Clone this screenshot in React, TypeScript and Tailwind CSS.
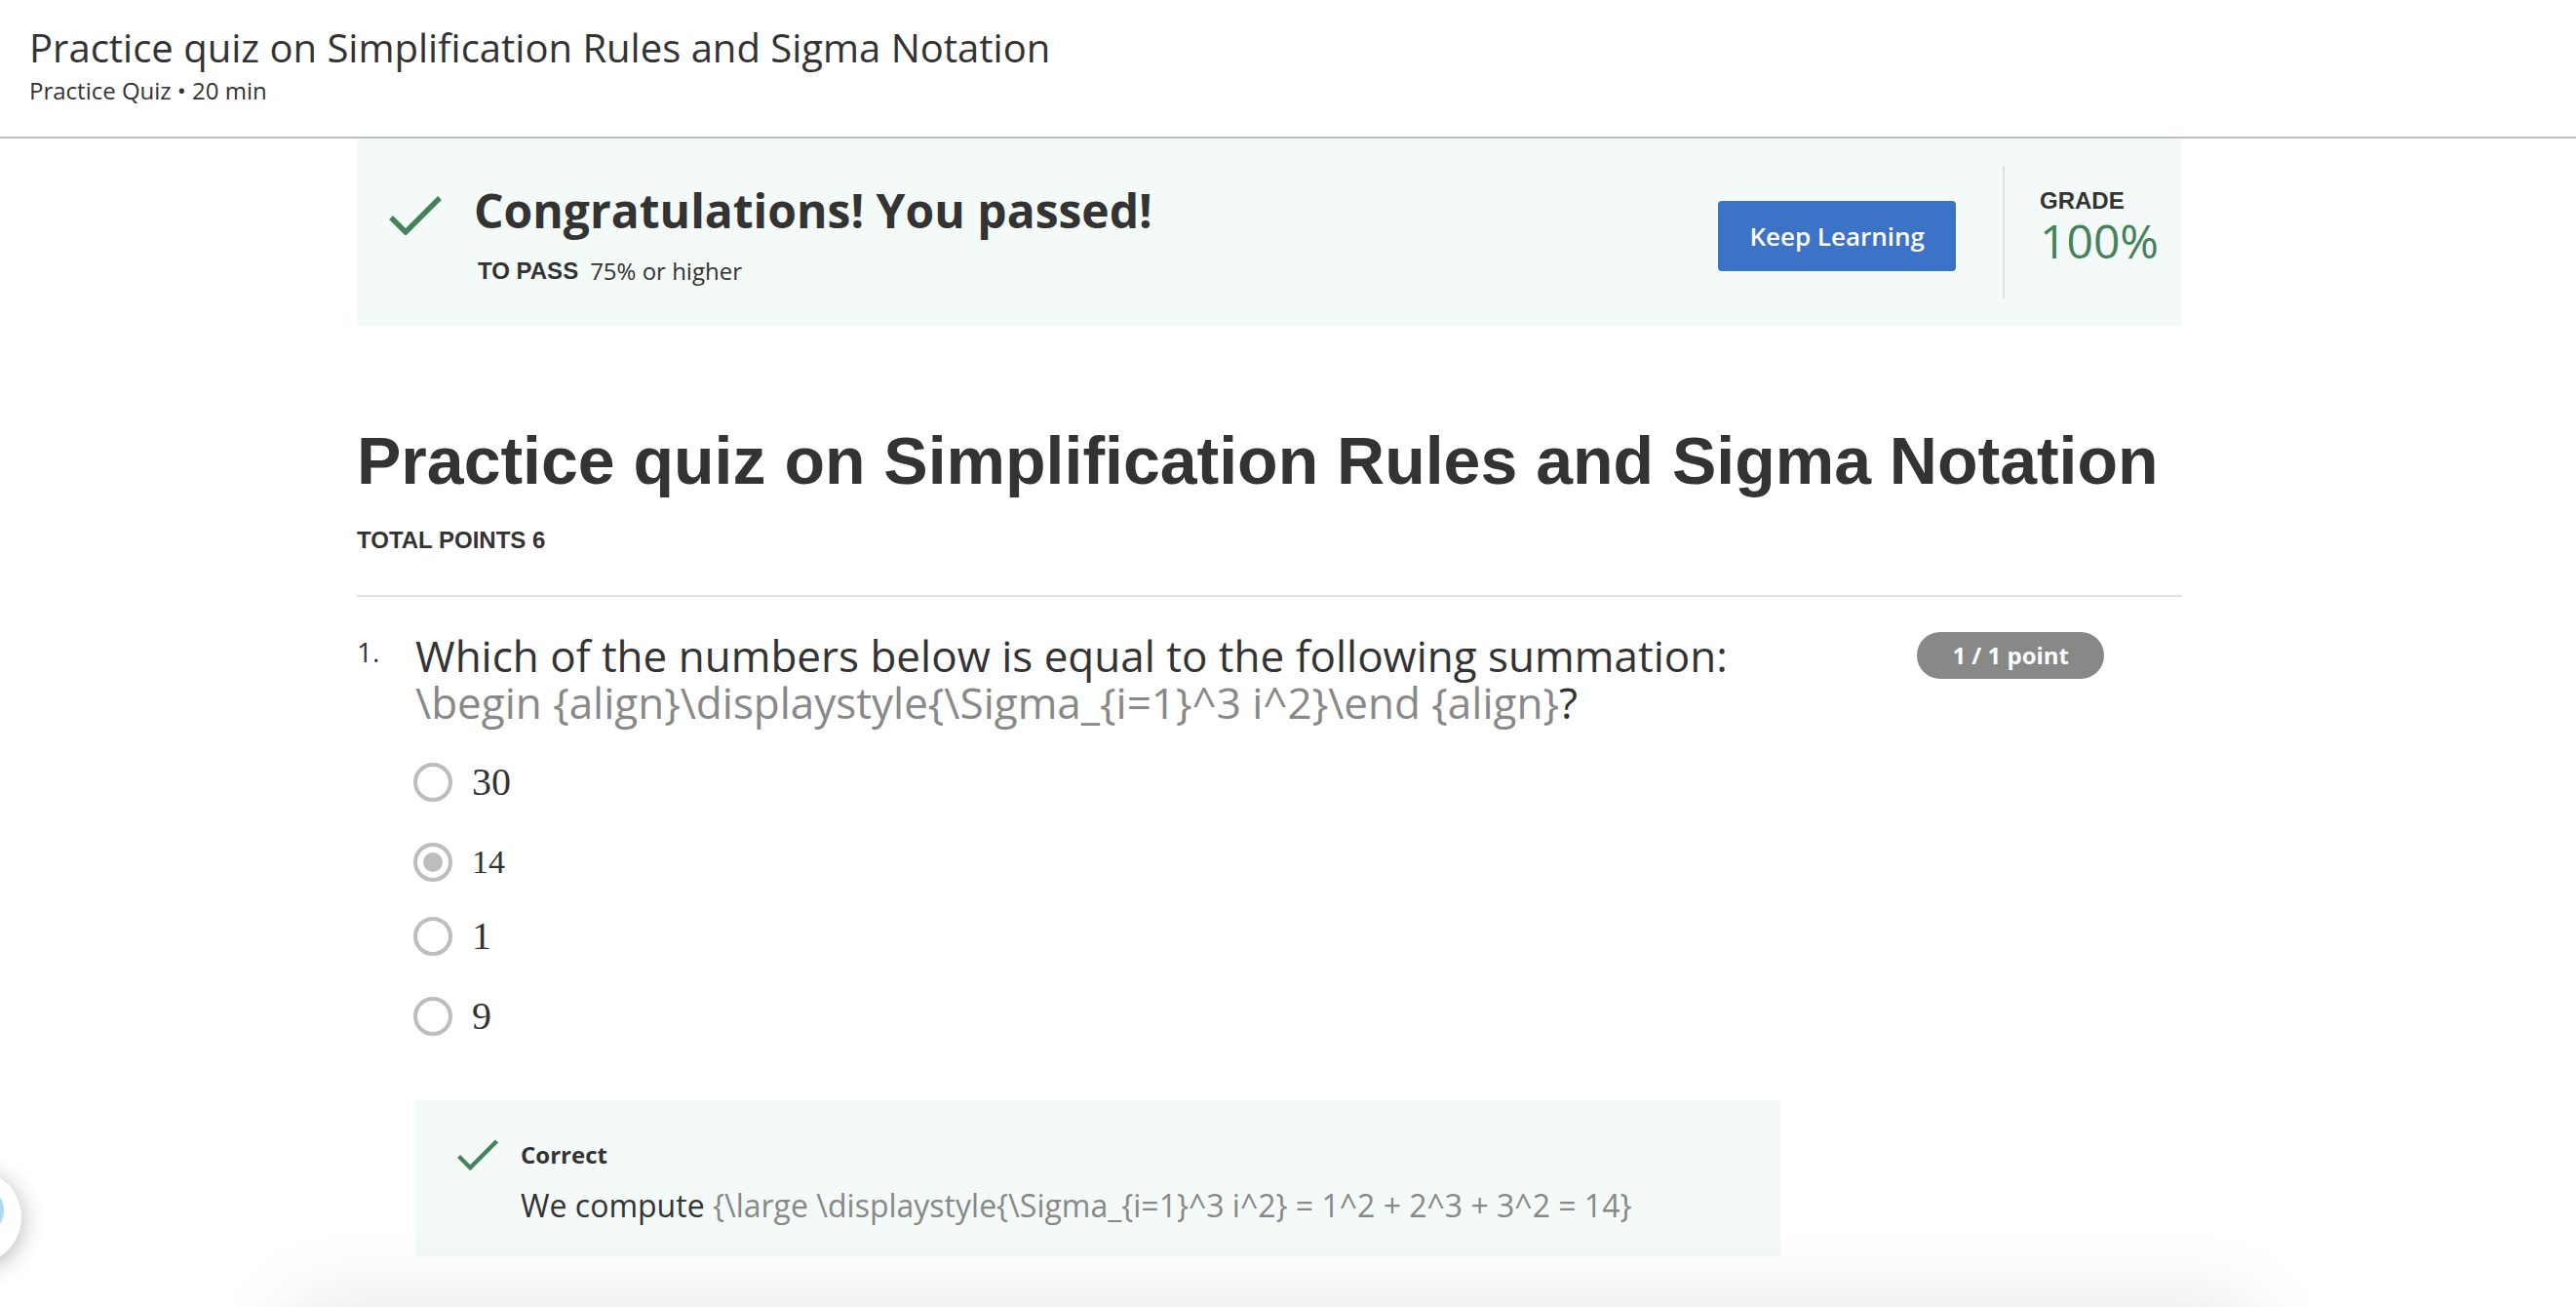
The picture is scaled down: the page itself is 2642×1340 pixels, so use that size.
const options = [
  { value: '30', text: 'text-[40px]', space: '' },
  { value: '14', text: 'text-[34px]', space: 'mt-[34px]' },
  { value: '1', text: 'text-[40px]', space: 'mt-[28px]' },
  { value: '9', text: 'text-[40px]', space: 'mt-[34px]' },
];

function Check({ className }: { className: string }) {
  return (
    <svg viewBox="0 0 54 40" fill="none" className={className} aria-hidden="true">
      <path d="M2 22 L17 37 L52 2" stroke="#43825a" strokeWidth="5.5" />
    </svg>
  );
}

function Header() {
  return (
    <header className="flex flex-col gap-1 border-b-2 border-[#bdbdbd] px-[30px] pt-[25px] pb-[31px]">
      <p className="text-[40px] leading-[48px]">Practice quiz on Simplification Rules and Sigma Notation</p>
      <p className="text-[24px] leading-8">Practice Quiz • 20 min</p>
    </header>
  );
}

function ResultBanner() {
  return (
    <section className="flex items-center bg-[#f4faf8]">
      <div className="flex flex-1 items-start gap-[33px] pt-[42px] pb-10 pl-[33px]">
        <Check className="mt-[17px] h-10 w-[54px]" />
        <div className="flex flex-col gap-[14px]">
          <h2 className="text-[48px] leading-[64px] font-bold">Congratulations! You passed!</h2>
          <p className="flex gap-3 pl-1 text-[24px] leading-8">
            <span className="font-['Liberation_Sans',sans-serif] font-bold">TO PASS</span>
            <span>75% or higher</span>
          </p>
        </div>
      </div>
      <button
        type="button"
        className="mt-2 mr-12 h-[72px] rounded-sm bg-[#3d73c7] px-8 text-[26px] font-semibold text-white"
      >
        Keep Learning
      </button>
      <div className="h-[136px] border-l-2 border-[#dde3e1] pt-5 pr-6 pl-9">
        <p className="font-['Liberation_Sans',sans-serif] text-[24px] leading-8 font-bold">GRADE</p>
        <p className="text-[48px] leading-[50px] text-[#43825a]">100%</p>
      </div>
    </section>
  );
}

function Question() {
  return (
    <section className="flex items-start pt-9">
      <span className="w-[60px] shrink-0 text-[28px] leading-10">1.</span>
      <div className="min-w-0 flex-1">
        <fieldset>
          <legend className="text-[44px] leading-[48px]">
            Which of the numbers below is equal to the following summation:
            <br />
            <span className="text-[#888]">{'\\begin {align}\\displaystyle{\\Sigma_{i=1}^3 i^2}\\end {align}'}</span>?
          </legend>
          <div className="flex flex-col items-start pt-[34px]">
            {options.map((o) => (
              <label key={o.value} className={`-ml-0.5 flex items-center gap-5 ${o.space}`}>
                <input
                  type="radio"
                  name="answer"
                  value={o.value}
                  defaultChecked={o.value === '14'}
                  className="grid size-10 appearance-none place-items-center rounded-full border-4 border-[#bdbdbd] bg-white before:size-5 before:rounded-full checked:before:bg-[#bdbdbd]"
                />
                <span className={`font-['Liberation_Serif',serif] leading-[48px] ${o.text}`}>{o.value}</span>
              </label>
            ))}
          </div>
        </fieldset>
        <div className="mt-[62px] flex items-start gap-[23px] bg-[#f4faf8] pt-10 pr-8 pb-8 pl-[43px]">
          <Check className="h-8 w-[42px] shrink-0" />
          <div className="flex flex-col gap-4">
            <p className="text-[24px] leading-8 font-bold">Correct</p>
            <p className="text-[32px] leading-10">
              We compute{' '}
              <span className="text-[#888]">
                {'{\\large \\displaystyle{\\Sigma_{i=1}^3 i^2} = 1^2 + 2^3 + 3^2 = 14}'}
              </span>
            </p>
          </div>
        </div>
      </div>
      <span className="mr-20 ml-[140px] shrink-0 rounded-full bg-[#888] px-9 text-[24px] leading-[48px] font-bold text-white">
        1 / 1 point
      </span>
    </section>
  );
}

export default function App() {
  return (
    <div className="relative h-screen overflow-hidden bg-white font-['Open_Sans',sans-serif] text-[#333]">
      <Header />
      <main className="pr-[38px]">
        <div className="mx-auto max-w-[1872px]">
          <ResultBanner />
          <h1 className="mt-[98px] font-['Liberation_Sans',sans-serif] text-[68px] leading-[80px] font-bold">
            Practice quiz on Simplification Rules and Sigma Notation
          </h1>
          <p className="mt-[26px] border-b-2 border-[#e1e1e1] pb-10 font-['Liberation_Sans',sans-serif] text-[24px] leading-8 font-bold">
            TOTAL POINTS 6
          </p>
          <Question />
        </div>
      </main>
      <button
        type="button"
        aria-label="Open help"
        className="absolute bottom-11 -left-[74px] size-24 rounded-full bg-white shadow-[0_4px_24px_rgba(0,0,0,0.3)]"
      >
        <span className="absolute top-[15px] right-[18px] size-[52px] rounded-full bg-[#a9daf2]" />
      </button>
      <div className="pointer-events-none absolute top-full right-[334px] left-[300px] h-40 shadow-[0_0_90px_rgba(0,0,0,0.11)]" />
    </div>
  );
}
